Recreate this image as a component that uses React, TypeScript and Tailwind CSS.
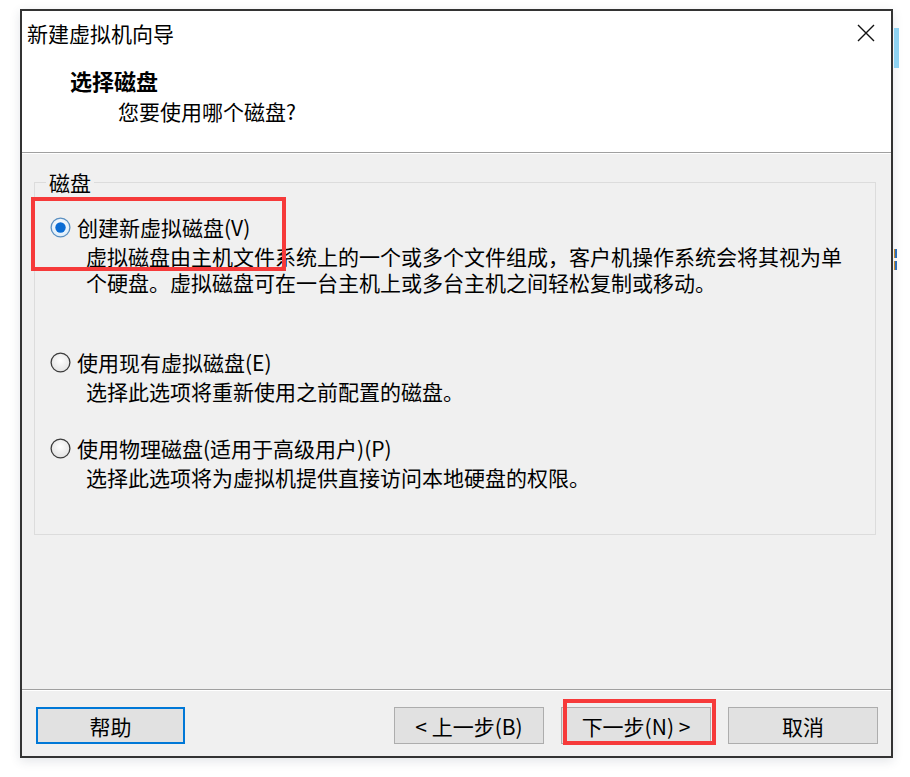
import React from "react";

const Radio = ({ checked }: { checked?: boolean }) => (
  <svg width="21" height="21" viewBox="0 0 21 21" className="shrink-0">
    <defs>
      <radialGradient id={checked ? "rg-on" : "rg-off"} cx="50%" cy="40%" r="60%">
        <stop offset="0%" stopColor="#ffffff" />
        <stop offset="100%" stopColor={checked ? "#dcecf9" : "#e2e2e2"} />
      </radialGradient>
    </defs>
    <circle
      cx="10.5"
      cy="10.5"
      r="9.4"
      fill={`url(#${checked ? "rg-on" : "rg-off"})`}
      stroke={checked ? "#5a8fc0" : "#3c3c3c"}
      strokeWidth="1.3"
    />
    {checked && <circle cx="10.5" cy="10.5" r="5.2" fill="#0a6cd4" />}
  </svg>
);

interface Option {
  label: string;
  desc: string;
  checked?: boolean;
  gap: string;
}

const options: Option[] = [
  {
    label: "创建新虚拟磁盘(V)",
    desc: "虚拟磁盘由主机文件系统上的一个或多个文件组成，客户机操作系统会将其视为单个硬盘。虚拟磁盘可在一台主机上或多台主机之间轻松复制或移动。",
    checked: true,
    gap: "mt-[19px]",
  },
  {
    label: "使用现有虚拟磁盘(E)",
    desc: "选择此选项将重新使用之前配置的磁盘。",
    gap: "mt-[54px]",
  },
  {
    label: "使用物理磁盘(适用于高级用户)(P)",
    desc: "选择此选项将为虚拟机提供直接访问本地硬盘的权限。",
    gap: "mt-[31px]",
  },
];

const Button = ({ children, focused }: { children: React.ReactNode; focused?: boolean }) => (
  <button
    className={
      focused
        ? "w-[149px] h-[37px] bg-[#e1e1e1] border-2 border-[#0078d7] text-[21px] leading-[26px] text-black"
        : "w-[150px] h-[37px] bg-[#e1e1e1] border border-[#adadad] text-[21px] leading-[26px] text-black"
    }
  >
    {children}
  </button>
);

export default function App() {
  return (
    <div className="relative w-[910px] h-[777px] bg-white pt-[9px] pl-[20px] font-['Noto_Sans_CJK_SC',sans-serif] text-black">
      {/* window */}
      <div className="w-[873px] h-[749px] border-2 border-[#333333] flex flex-col bg-white shadow-[0_3px_10px_rgba(60,70,90,0.14)]">
        {/* header */}
        <div className="h-[141px] bg-white">
          <div className="h-[44px] flex items-center justify-between pl-[5px] pr-[16px]">
            <span className="text-[21px] leading-[26px]">新建虚拟机向导</span>
            <svg width="18" height="18" viewBox="0 0 18 18">
              <path d="M1 1 L17 17 M17 1 L1 17" stroke="#111" strokeWidth="1.4" />
            </svg>
          </div>
          <div className="pl-[48px] mt-[11px] text-[22px] leading-[28px] font-bold">选择磁盘</div>
          <div className="pl-[96px] mt-[4px] text-[21px] leading-[26px]">您要使用哪个磁盘?</div>
        </div>
        <div className="h-px bg-[#a0a0a0]" />
        <div className="h-px bg-white" />

        {/* body */}
        <div className="flex-1 bg-[#f0f0f0] pt-[15px] pl-[12px]">
          <fieldset className="w-[842px] border border-[#dcdcdc] pb-[44px]">
            <legend className="ml-[11px] px-[3px] text-[21px] leading-[26px]">磁盘</legend>
            <div className="pl-[15px]">
              {options.map((o) => (
                <div key={o.label} className={o.gap}>
                  <div className="flex items-center gap-[6px] h-[26px]">
                    <Radio checked={o.checked} />
                    <span className="text-[21px] leading-[26px] whitespace-nowrap">{o.label}</span>
                  </div>
                  <p className="mt-[3px] pl-[36px] w-[806px] text-[21px] leading-[26px]">{o.desc}</p>
                </div>
              ))}
            </div>
          </fieldset>
        </div>

        {/* footer */}
        <div className="h-px bg-[#a0a0a0]" />
        <div className="h-px bg-white" />
        <div className="h-[65px] bg-[#f0f0f0] flex items-start pt-[16px] pl-[14px] pr-[13px]">
          <Button focused>帮助</Button>
          <div className="flex-1" />
          <div className="flex gap-[17px]">
            <Button>&lt; 上一步(B)</Button>
            <Button>下一步(N) &gt;</Button>
            <Button>取消</Button>
          </div>
        </div>
      </div>

      {/* bits of the desktop behind the dialog */}
      <div className="absolute left-[894px] top-[28px] w-[5px] h-[40px] bg-[#8fd3f3]" />
      <div className="absolute left-[894px] top-[249px] w-[3px] h-[22px] flex flex-col gap-[3px]">
        <div className="h-[9px] bg-[#2f6fb8] border-l border-[#c98a2a]" />
        <div className="h-[9px] bg-[#2f6fb8] border-l border-[#c98a2a]" />
      </div>

      {/* red annotation boxes */}
      <div className="absolute left-[31px] top-[197px] w-[255px] h-[74px] border-4 border-[#f63a3a]" />
      <div className="absolute left-[563px] top-[699px] w-[153px] h-[46px] border-4 border-[#f63a3a]" />
    </div>
  );
}
